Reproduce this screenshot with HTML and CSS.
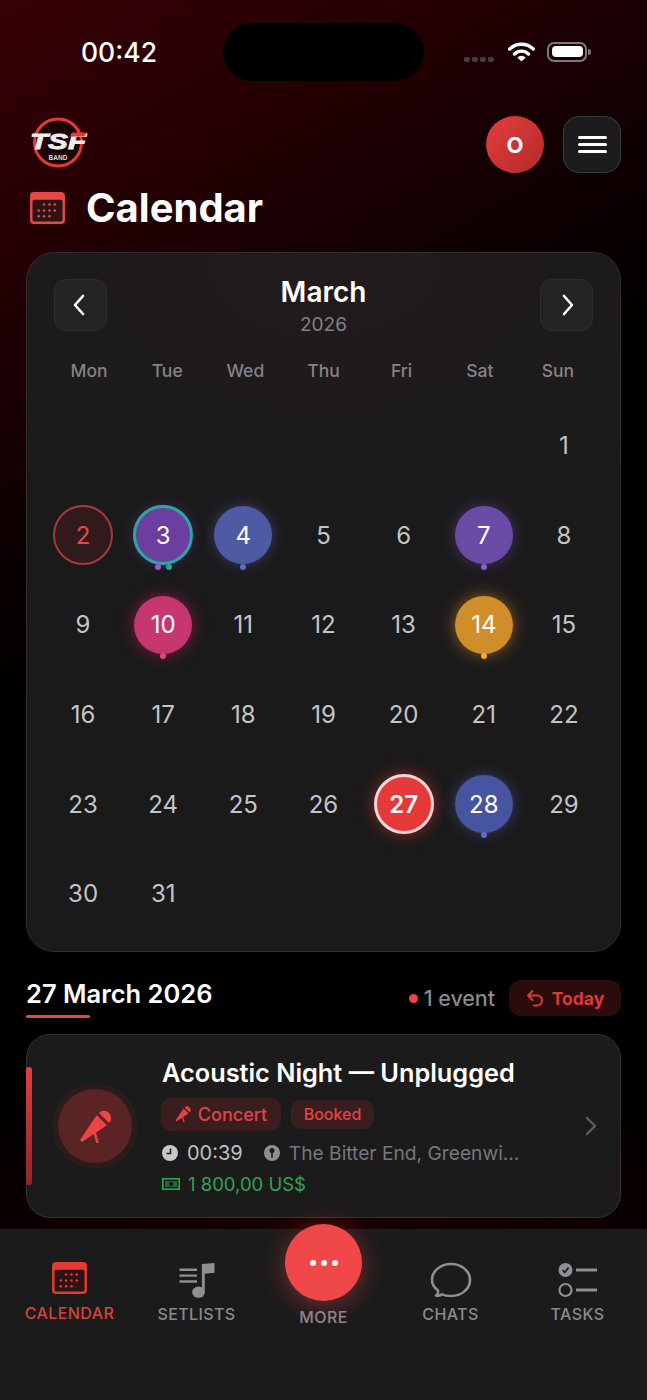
FILE: index.html
```html
<!DOCTYPE html>
<html lang="en">
<head>
  <meta charset="UTF-8">
  <meta name="viewport" content="width=device-width, initial-scale=1.0">
  <title>Calendar - TSF Band</title>
  <link rel="stylesheet" href="styles.css">
</head>
<body>
  <svg class="defs" width="0" height="0">
    <symbol id="cal" viewBox="0 0 36 33">
      <rect x="0" y="0" width="36" height="33" rx="4" fill="currentColor"/>
      <rect x="2.500" y="8" width="31" height="22.500" rx="2" fill="#2e1315"/>
      <g fill="currentColor">
        <circle cx="14.500" cy="13" r="1.300"/><circle cx="20" cy="13" r="1.300"/><circle cx="25.500" cy="13" r="1.300"/>
        <circle cx="9" cy="19" r="1.300"/><circle cx="14.500" cy="19" r="1.300"/><circle cx="20" cy="19" r="1.300"/><circle cx="25.500" cy="19" r="1.300"/>
        <circle cx="9" cy="25" r="1.300"/><circle cx="14.500" cy="25" r="1.300"/><circle cx="20" cy="25" r="1.300"/>
      </g>
    </symbol>
    <symbol id="mic" viewBox="0 0 34 34">
      <path d="M20.500 3 A7 7 0 0 1 31 13.500 Z" fill="currentColor"/>
      <path d="M18.500 5.500 L28.500 15.500 L25.500 18 L6 31 L3 33 L1 31 L3 28 L16 8.500 Z" fill="currentColor"/>
      <path d="M15.500 21 L19 33.500" stroke="currentColor" stroke-width="2.600" fill="none" stroke-linecap="round"/>
    </symbol>
  </svg>

  <div class="page">
    <main class="content">
      <div class="status">
        <span class="clock">00:42</span>
        <div class="island"></div>
        <div class="status-icons">
          <div class="signal"><i></i><i></i><i></i><i></i></div>
          <svg class="wifi" width="27" height="20" viewBox="0 0 27 20">
            <path d="M1.700 7 A17 17 0 0 1 25.300 7" fill="none" stroke="#fff" stroke-width="3.400" stroke-linecap="round"/>
            <path d="M6.500 12 A10 10 0 0 1 20.500 12" fill="none" stroke="#fff" stroke-width="3.400" stroke-linecap="round"/>
            <path d="M13.500 19.500 L9.300 15.500 A6 6 0 0 1 17.700 15.500 Z" fill="#fff"/>
          </svg>
          <div class="battery"><div class="battery-fill"></div></div>
          <div class="battery-cap"></div>
        </div>
      </div>

      <div class="topbar">
        <svg class="logo" width="58" height="52" viewBox="0 0 58 52">
          <circle cx="29" cy="23.500" r="23.500" fill="#1a0406" stroke="#e53935" stroke-width="3"/>
          <text class="logo-tsf" x="1" y="30" textLength="56" lengthAdjust="spacingAndGlyphs">TSF</text>
          <polygon points="43,13.500 58,13.500 55.500,17.500 41,17.500" fill="#e53935"/>
          <text class="logo-band" x="29" y="41" text-anchor="middle">BAND</text>
        </svg>
        <div class="top-actions">
          <div class="avatar">O</div>
          <div class="menu-btn"><span></span><span></span><span></span></div>
        </div>
      </div>

      <div class="page-title">
        <svg class="title-icon" width="35" height="32"><use href="#cal"/></svg>
        <h1>Calendar</h1>
      </div>

      <section class="cal-card">
        <div class="cal-head">
          <div class="nav-btn">
            <svg class="prev" width="14" height="22" viewBox="0 0 14 22"><path d="M11 2 L3 11 L11 20" fill="none" stroke="#fff" stroke-width="2.600" stroke-linecap="round" stroke-linejoin="round"/></svg>
          </div>
          <div class="cal-month">
            <h2>March</h2>
            <span>2026</span>
          </div>
          <div class="nav-btn">
            <svg class="next" width="14" height="22" viewBox="0 0 14 22"><path d="M3 2 L11 11 L3 20" fill="none" stroke="#fff" stroke-width="2.600" stroke-linecap="round" stroke-linejoin="round"/></svg>
          </div>
        </div>

        <div class="weekdays">
          <span>Mon</span><span>Tue</span><span>Wed</span><span>Thu</span><span>Fri</span><span>Sat</span><span>Sun</span>
        </div>

        <div class="days">
          <div class="day"></div><div class="day"></div><div class="day"></div><div class="day"></div><div class="day"></div><div class="day"></div>
          <div class="day"><b>1</b></div>

          <div class="day"><b class="past">2</b></div>
          <div class="day"><b class="ev purple ring">3</b><div class="dots"><i class="d-purple"></i><i class="d-teal"></i></div></div>
          <div class="day"><b class="ev blue">4</b><div class="dots"><i class="d-blue"></i></div></div>
          <div class="day"><b>5</b></div>
          <div class="day"><b>6</b></div>
          <div class="day"><b class="ev violet">7</b><div class="dots"><i class="d-purple"></i></div></div>
          <div class="day"><b>8</b></div>

          <div class="day"><b>9</b></div>
          <div class="day"><b class="ev pink">10</b><div class="dots"><i class="d-pink"></i></div></div>
          <div class="day"><b>11</b></div>
          <div class="day"><b>12</b></div>
          <div class="day"><b>13</b></div>
          <div class="day"><b class="ev amber">14</b><div class="dots"><i class="d-amber"></i></div></div>
          <div class="day"><b>15</b></div>

          <div class="day"><b>16</b></div>
          <div class="day"><b>17</b></div>
          <div class="day"><b>18</b></div>
          <div class="day"><b>19</b></div>
          <div class="day"><b>20</b></div>
          <div class="day"><b>21</b></div>
          <div class="day"><b>22</b></div>

          <div class="day"><b>23</b></div>
          <div class="day"><b>24</b></div>
          <div class="day"><b>25</b></div>
          <div class="day"><b>26</b></div>
          <div class="day"><b class="selected">27</b></div>
          <div class="day"><b class="ev blue2">28</b><div class="dots"><i class="d-blue"></i></div></div>
          <div class="day"><b>29</b></div>

          <div class="day"><b>30</b></div>
          <div class="day"><b>31</b></div>
        </div>
      </section>

      <div class="day-head">
        <h3>27 March 2026</h3>
        <div class="day-head-right">
          <span class="count"><i></i>1 event</span>
          <span class="today">
            <svg width="18" height="18" viewBox="0 0 18 18"><path d="M6.500 2 L2 6.500 L6.500 11 M2 6.500 H11 A5 5 0 0 1 11 16.500 H8" fill="none" stroke="currentColor" stroke-width="2" stroke-linecap="round" stroke-linejoin="round"/></svg>
            Today
          </span>
        </div>
      </div>

      <article class="event">
        <div class="event-bar"></div>
        <div class="event-icon">
          <svg width="33" height="33"><use href="#mic"/></svg>
        </div>
        <div class="event-body">
          <h4>Acoustic Night — Unplugged</h4>
          <div class="tags">
            <span class="tag tag-type"><svg width="16" height="16"><use href="#mic"/></svg>Concert</span>
            <span class="tag tag-status">Booked</span>
          </div>
          <div class="meta">
            <svg width="16" height="16" viewBox="0 0 16 16"><circle cx="8" cy="8" r="8" fill="#c8c8cc"/><path d="M8.500 3.500 V8.500 H4.500" fill="none" stroke="#1c1b1c" stroke-width="1.500"/></svg>
            <span class="time">00:39</span>
            <svg class="pin" width="16" height="16" viewBox="0 0 16 16"><circle cx="8" cy="8" r="8" fill="#8e8e93"/><circle cx="8" cy="5.500" r="2.500" fill="#1c1b1c"/><rect x="7.200" y="6" width="1.600" height="7" fill="#1c1b1c"/></svg>
            <span class="place">The Bitter End, Greenwi...</span>
          </div>
          <div class="price">
            <svg width="18" height="14" viewBox="0 0 18 14"><rect x="0.800" y="1.800" width="16.400" height="10.400" fill="none" stroke="currentColor" stroke-width="1.600"/><rect x="3" y="4" width="12" height="6" fill="currentColor" opacity=".55"/><circle cx="9" cy="7" r="2.200" fill="#1c1b1c"/></svg>
            1 800,00 US$
          </div>
        </div>
        <svg class="event-arrow" width="12" height="20" viewBox="0 0 12 20"><path d="M2 2 L10 10 L2 18" fill="none" stroke="#5c5c60" stroke-width="2.400" stroke-linecap="round" stroke-linejoin="round"/></svg>
      </article>
    </main>

    <nav class="tabbar">
      <div class="tab active">
        <svg class="tab-cal" width="35" height="32"><use href="#cal"/></svg>
        <span>Calendar</span>
      </div>
      <div class="tab">
        <svg width="38" height="36" viewBox="0 0 38 37">
          <path d="M1 8 H19 M1 14 H19 M1 20 H19" stroke="#8e8e93" stroke-width="2.400" fill="none"/>
          <path d="M24 31 V2 L37 1 V11 L27 12 V31 Z" fill="#8e8e93"/>
          <ellipse cx="20.500" cy="31" rx="6.500" ry="5.800" fill="#8e8e93"/>
        </svg>
        <span>Setlists</span>
      </div>
      <div class="tab more">
        <div class="fab"><i></i><i></i><i></i></div>
        <span>More</span>
      </div>
      <div class="tab">
        <svg width="42" height="36" viewBox="0 0 42 36">
          <path d="M6 33.500 C8 32 8.500 30.500 8 28.500 C4 25.500 2 22 2 18 C2 9 10.500 2 21 2 C31.500 2 40 9 40 18 C40 27 31.500 34 21 34 C17.500 34 14.500 33.500 12 32.300 C10.500 33.300 8.500 34 6 33.500 Z" fill="none" stroke="#8e8e93" stroke-width="2.600" stroke-linejoin="round"/>
        </svg>
        <span>Chats</span>
      </div>
      <div class="tab">
        <svg width="40" height="36" viewBox="0 0 40 36">
          <circle cx="7.500" cy="8" r="7" fill="#8e8e93"/>
          <path d="M4.500 8 L6.800 10.500 L10.500 5.500" fill="none" stroke="#1c1c1e" stroke-width="1.700"/>
          <path d="M18 8 H39 M18 28 H39" stroke="#8e8e93" stroke-width="2.800" fill="none"/>
          <circle cx="7.500" cy="28" r="6" fill="none" stroke="#8e8e93" stroke-width="2.200"/>
        </svg>
        <span>Tasks</span>
      </div>
    </nav>
  </div>
</body>
</html>
```
FILE: styles.css
```css
* {
  box-sizing: border-box;
}
body {
  margin: 0;
  background: #000;
  font-family: Inter, "Liberation Sans", sans-serif;
  color: #fff;
}
h1, h2, h3, h4 {
  margin: 0;
}
.defs {
  position: absolute;
}
.page {
  width: 647px;
  height: 1400px;
  display: flex;
  flex-direction: column;
  overflow: hidden;
}
.content {
  flex: 1;
  min-height: 0;
  padding: 0 26px;
  background:
    radial-gradient(ellipse 520px 170px at 50% 100%, #1a0003 0%, rgba(26,0,3,0) 100%),
    linear-gradient(150deg, #360006 0%, #220004 18%, #0a0001 36%, #000 46%);
}

/* status bar */
.status {
  height: 116px;
  display: flex;
  padding: 23px 0 0 55px;
}
.clock {
  width: 77px;
  font-size: 26.500px;
  font-weight: 500;
  line-height: 58px;
  height: 58px;
  white-space: nowrap;
}
.island {
  width: 201px;
  height: 58px;
  margin-left: 65px;
  border-radius: 29px;
  background: #000;
}
.status-icons {
  display: flex;
  align-items: center;
  height: 58px;
  margin-left: 40px;
  flex: 1;
}
.signal {
  display: flex;
  gap: 2px;
  margin-top: 14px;
  margin-right: 14px;
}
.signal i {
  width: 6px;
  height: 5px;
  border-radius: 2px;
  background: #4a3d40;
}
.wifi {
  margin-right: 12px;
}
.battery {
  width: 40px;
  height: 20px;
  padding: 2.500px;
  border: 2px solid #85787a;
  border-radius: 7px;
  margin-top: -1px;
}
.battery-fill {
  width: 100%;
  height: 100%;
  background: #fff;
  border-radius: 4px;
}
.battery-cap {
  width: 3px;
  height: 6px;
  margin-top: -1px;
  margin-left: 1px;
  background: #7a7072;
  border-radius: 0 2px 2px 0;
}

/* top */
.topbar {
  display: flex;
  justify-content: space-between;
  align-items: center;
  height: 57px;
}
.logo {
  margin-left: 3px;
  overflow: visible;
}
.logo-tsf {
  font-family: "Liberation Sans", sans-serif;
  font-size: 22px;
  font-weight: 700;
  font-style: italic;
  fill: #eeeeee;
  stroke: #eeeeee;
  stroke-width: .8px;
}
.logo-band {
  font-family: "Liberation Sans", sans-serif;
  font-size: 6.500px;
  font-weight: 700;
  fill: #ddd;
}
.top-actions {
  display: flex;
  gap: 19px;
}
.avatar {
  width: 58px;
  height: 57px;
  border-radius: 50%;
  background: linear-gradient(135deg, #e53e3e, #b02a2a);
  display: flex;
  align-items: center;
  justify-content: center;
  font-size: 22px;
  font-weight: 700;
}
.menu-btn {
  width: 58px;
  height: 57px;
  border-radius: 16px;
  background: #1c1c1e;
  border: 1.500px solid #3a3a3c;
  display: flex;
  flex-direction: column;
  align-items: center;
  justify-content: center;
  gap: 4px;
}
.menu-btn span {
  width: 29px;
  height: 3px;
  background: #fff;
  border-radius: 2px;
}
.page-title {
  display: flex;
  align-items: center;
  gap: 21px;
  height: 44px;
  margin-top: 13px;
  padding-left: 4px;
  margin-bottom: 22px;
}
.title-icon {
  color: #e5484a;
}
.page-title h1 {
  font-size: 40px;
  font-weight: 700;
  line-height: 44px;
}

/* calendar card */
.cal-card {
  height: 700px;
  padding: 26px 16px 0;
  border-radius: 28px;
  background: radial-gradient(ellipse 420px 300px at 50% 0, #211b1c, #1b1a1b 100%);
  border: 1px solid #332b2c;
}
.cal-head {
  display: flex;
  justify-content: space-between;
  padding: 0 11px;
  height: 79px;
}
.nav-btn {
  width: 53px;
  height: 52px;
  border-radius: 12px;
  background: #232324;
  border: 1px solid #2e2e30;
  display: flex;
  align-items: center;
  justify-content: center;
}
.prev {
  margin-right: 4px;
}
.next {
  margin-left: 4px;
}
.cal-month {
  text-align: center;
  margin-top: -2px;
}
.cal-month h2 {
  font-size: 28px;
  font-weight: 600;
  line-height: 30px;
}
.cal-month span {
  display: block;
  font-size: 19px;
  color: #828286;
  line-height: 30px;
  margin-top: 3px;
}
.weekdays {
  display: grid;
  grid-template-columns: repeat(7, 1fr);
  padding: 0 7px;
  height: 43px;
  text-align: center;
  font-size: 17.500px;
  font-weight: 500;
  color: #838387;
  line-height: 26px;
}
.days {
  display: grid;
  grid-template-columns: repeat(7, 1fr);
  grid-auto-rows: 89.600px;
}
.day {
  position: relative;
  display: flex;
  align-items: center;
  justify-content: center;
}
.day b {
  width: 58px;
  height: 58px;
  border-radius: 50%;
  display: flex;
  align-items: center;
  justify-content: center;
  font-size: 24px;
  font-weight: 400;
  color: #c4c4c6;
}
.day .past {
  width: 60px;
  height: 60px;
  color: #ef4444;
  border: 2px solid #a63a35;
  background: #301a1b;
}
.day .ev {
  color: #fff;
}
.day .purple {
  background: #6b3fa0;
}
.day .ring {
  width: 60px;
  height: 60px;
  border: 3px solid #2da69f;
  box-shadow: 0 0 12px rgba(107,63,160,.4);
}
.day .blue {
  background: #4f5aa5;
  box-shadow: 0 0 14px rgba(92,107,192,.45);
}
.day .blue2 {
  background: #47549f;
  box-shadow: 0 0 14px rgba(92,107,192,.45);
}
.day .violet {
  background: #6a4ca6;
  box-shadow: 0 0 14px rgba(126,87,194,.45);
}
.day .pink {
  background: #c7376f;
  box-shadow: 0 0 16px rgba(233,30,99,.5);
}
.day .amber {
  background: #d08e2a;
  box-shadow: 0 0 16px rgba(255,167,38,.5);
}
.day .selected {
  width: 60px;
  height: 60px;
  background: #e53939;
  border: 3px solid #f5d5d5;
  color: #fff;
  font-weight: 600;
  box-shadow: 0 0 16px rgba(229,57,53,.55);
}
.dots {
  position: absolute;
  left: 0;
  right: 0;
  top: 73px;
  display: flex;
  justify-content: center;
  gap: 5px;
}
.dots i {
  width: 6px;
  height: 6px;
  border-radius: 50%;
}
.d-purple { background: #8e5cd6; }
.d-teal { background: #1fa88a; }
.d-blue { background: #5c6bd0; }
.d-pink { background: #ec407a; }
.d-amber { background: #ffa726; }

/* selected day */
.day-head {
  position: relative;
  display: flex;
  justify-content: space-between;
  align-items: center;
  height: 36px;
  margin-top: 28px;
  margin-bottom: 18px;
}
.day-head h3 {
  font-size: 25.500px;
  font-weight: 600;
  margin-top: -9px;
}
.day-head h3::after {
  content: "";
  position: absolute;
  left: 0;
  top: 35px;
  width: 64px;
  height: 3px;
  border-radius: 2px;
  background: #ef4444;
}
.day-head-right {
  display: flex;
  align-items: center;
  gap: 14px;
}
.count {
  display: flex;
  align-items: center;
  gap: 6px;
  font-size: 21.400px;
  font-weight: 500;
  color: #8a8a8e;
}
.count i {
  width: 9px;
  height: 9px;
  border-radius: 50%;
  background: #ef4444;
}
.today {
  display: flex;
  align-items: center;
  gap: 8px;
  height: 36px;
  width: 112px;
  justify-content: center;
  border-radius: 12px;
  background: #2c0b0d;
  color: #d93a3a;
  font-size: 17.500px;
  font-weight: 700;
}
.event {
  position: relative;
  display: flex;
  align-items: center;
  height: 184px;
  border-radius: 24px;
  background: #1c1b1c;
  border: 1.500px solid #38302f;
}
.event-bar {
  position: absolute;
  left: -1px;
  top: 32px;
  width: 6px;
  height: 118px;
  border-radius: 3px;
  background: linear-gradient(#e53e3e, #8f2628);
}
.event-icon {
  width: 74px;
  height: 74px;
  margin-left: 31px;
  flex: none;
  border-radius: 50%;
  background: #5a2324;
  box-shadow: 0 0 0 6px #2a1c1d;
  color: #ef4444;
  display: flex;
  align-items: center;
  justify-content: center;
}
.event-body {
  margin-left: 30px;
  flex: 1;
  min-width: 0;
}
.event-body h4 {
  font-size: 25.300px;
  font-weight: 600;
  line-height: 30px;
}
.tags {
  display: flex;
  align-items: center;
  gap: 10px;
  margin-top: 10px;
  margin-left: -1px;
}
.tag {
  display: flex;
  align-items: center;
  border-radius: 10px;
  background: #3a1d1e;
  color: #e04444;
  font-weight: 500;
}
.tag-type {
  height: 33px;
  width: 120px;
  justify-content: center;
  gap: 7px;
  font-size: 18px;
}
.tag-status {
  height: 29px;
  width: 83px;
  justify-content: center;
  font-size: 16px;
}
.meta {
  display: flex;
  align-items: center;
  font-size: 19px;
  margin-top: 10px;
  height: 24px;
}
.time {
  margin-left: 9px;
  font-size: 20px;
  color: #c0c0c2;
}
.pin {
  margin-left: 21px;
}
.place {
  margin-left: 9px;
  font-size: 19.200px;
  color: #77777b;
}
.price {
  display: flex;
  align-items: center;
  gap: 8px;
  margin-top: 8px;
  font-size: 18.500px;
  color: #2fa350;
}
.event-arrow {
  position: absolute;
  right: 23px;
  top: 81px;
}

/* tab bar */
.tabbar {
  height: 171px;
  flex: none;
  background: #1b1b1c;
  display: grid;
  grid-template-columns: repeat(5, 127px);
  padding: 33px 6px 0;
}
.tab {
  display: flex;
  flex-direction: column;
  align-items: center;
  height: 62px;
  justify-content: space-between;
  color: #8a8a8e;
  font-size: 16px;
  font-weight: 500;
  letter-spacing: .4px;
  text-transform: uppercase;
}
.tab.active {
  color: #d8403a;
}
.tab.active span {
  margin-bottom: 1px;
}
.tab-cal {
  color: #e53935;
}
.tab.more {
  position: relative;
  justify-content: flex-end;
}
.tab.more span {
  margin-bottom: -3px;
}
.fab {
  position: absolute;
  top: -38px;
  left: 25px;
  width: 77px;
  height: 77px;
  border-radius: 50%;
  background: #f04848;
  box-shadow: 0 4px 24px rgba(239,68,68,.45);
  display: flex;
  align-items: center;
  justify-content: center;
  gap: 5px;
}
.fab i {
  width: 6px;
  height: 6px;
  border-radius: 50%;
  background: #fff;
}
```
